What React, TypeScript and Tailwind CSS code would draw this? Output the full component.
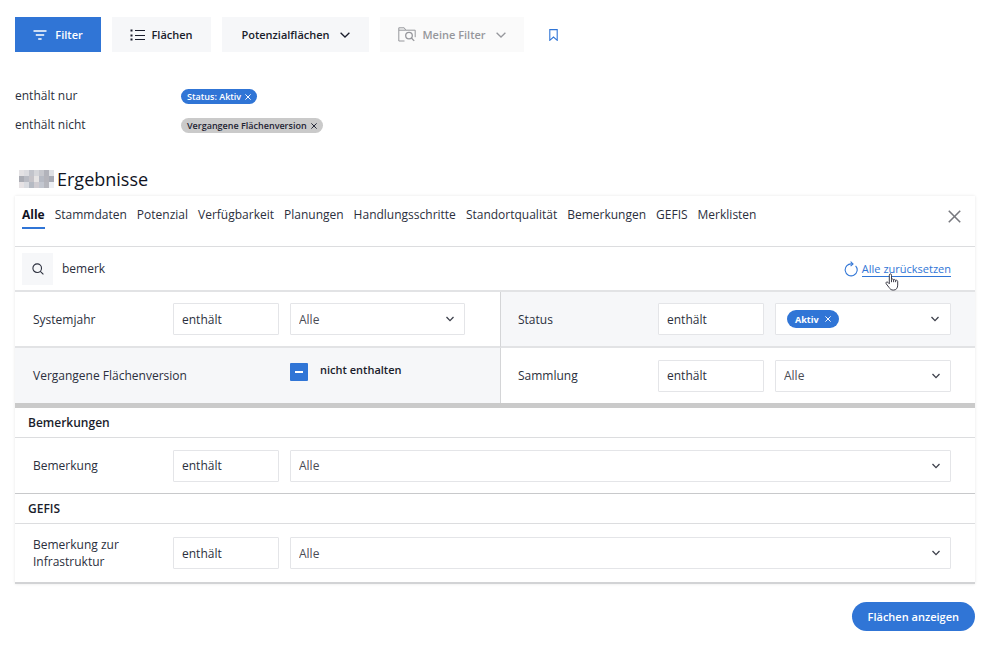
import type { ReactNode } from "react";

const BLUE_CHIP = "bg-[#3075d6] text-white";
const GREY_CHIP = "bg-[#cacaca] text-[#1f2433]";

const tabs = [
  "Alle",
  "Stammdaten",
  "Potenzial",
  "Verfügbarkeit",
  "Planungen",
  "Handlungsschritte",
  "Standortqualität",
  "Bemerkungen",
  "GEFIS",
  "Merklisten",
];

const mosaic = [
  ["#e4e2e4", "#dcdce0", "#c2c4cb", "#d5d6da", "#c6c7cd", "#b2b3bb", "#dfe1e5"],
  ["#aaacb4", "#b9bbc3", "#c5c3c8", "#e6e4e4", "#b6bac4", "#b4b4bb", "#a8abb5"],
  ["#e6e2e4", "#d9dbe0", "#b5bac3", "#cfccd1", "#c3c7d0", "#b6b7be", "#eceff4"],
];

const Chevron = ({ className = "", wide = false }: { className?: string; wide?: boolean }) => (
  <svg
    width={wide ? 10 : 8}
    height="6"
    viewBox={wide ? "0 0 10 6" : "0 0 8 6"}
    fill="none"
    stroke="currentColor"
    strokeWidth="1.3"
    className={className}
  >
    <path d={wide ? "M.6.8 5 5 9.4.8" : "M.5 1 4 4.6 7.5 1"} />
  </svg>
);

const Cross = ({ size, stroke = 1.2 }: { size: number; stroke?: number }) => (
  <svg width={size} height={size} viewBox="0 0 10 10" fill="none" stroke="currentColor" strokeWidth={stroke}>
    <path d="M.6.6 9.4 9.4M9.4.6.6 9.4" />
  </svg>
);

const FilterIcon = () => (
  <svg width="14" height="10" viewBox="0 0 14 10" fill="none" stroke="currentColor" strokeWidth="1.7">
    <path d="M.5 1h13M2.8 5h8.4M5.2 9h3.4" />
  </svg>
);

const ListIcon = () => (
  <svg width="15" height="12" viewBox="0 0 15 12" fill="none" stroke="currentColor">
    <path d="M5 1.5h10M5 6.5h10M5 10.5h10" strokeWidth="1" />
    <path d="M.5 1.5h2M.5 6.5h2M.5 10.5h2" strokeWidth="2" />
  </svg>
);

const FolderSearchIcon = () => (
  <svg width="18" height="15" viewBox="0 0 18 15" fill="none" stroke="currentColor" strokeWidth="1">
    <path d="M6.5 14H.8V.8h5.4l1.6 2.4h9.4v7" />
    <path d="M.8 3.2h7" />
    <circle cx="11" cy="8.6" r="3.3" strokeWidth="1.3" />
    <path d="m13.4 11 2.8 2.9" strokeWidth="1.3" />
  </svg>
);

const BookmarkIcon = () => (
  <svg width="9" height="12" viewBox="0 0 9 12" fill="none" stroke="currentColor" strokeWidth="1.1">
    <path d="M.8.6h7.4v10.7L4.5 8 .8 11.3Z" />
  </svg>
);

const SearchIcon = () => (
  <svg width="12" height="12" viewBox="0 0 12 12" fill="none" stroke="currentColor" strokeWidth="1.1">
    <circle cx="5.2" cy="5.2" r="4.3" />
    <path d="m8.3 8.3 3.1 3.1" />
  </svg>
);

const ResetIcon = () => (
  <svg width="14" height="16" viewBox="0 0 14 16" fill="none" stroke="currentColor" strokeWidth="1.1">
    <path d="M11.6 4.8A6 6 0 1 1 8 2.9" />
    <path d="M6.6.7 9 2.9 6.6 5.1" />
  </svg>
);

const HandCursor = ({ className }: { className: string }) => (
  <svg width="14" height="18" viewBox="0 0 14 18" className={className}>
    <path
      d="M4.3 10.8V2.2c0-1.8 2.2-1.8 2.2 0v4.2c.5-.7 2-.5 2.1.5.6-.7 1.9-.4 2 .6.7-.6 2.1-.2 2.1 1v3.6c0 2.9-1.4 5-4.3 5-2.2 0-3.4-1-4.4-2.7L1.2 10.8C.3 9.3 2 8.3 3 9.4Z"
      fill="#fff"
      stroke="#3d3d48"
      strokeWidth="1"
      strokeLinejoin="round"
    />
    <path d="M6.5 6.4v2.8M8.6 6.9v2.3M10.6 7.5v1.7" stroke="#3d3d48" strokeWidth="1" />
  </svg>
);

const Chip = ({ label, tone, large = false }: { label: string; tone: string; large?: boolean }) => (
  <span
    className={`inline-flex items-center rounded-full text-[9px] ${tone} ${
      large ? "h-[18px] gap-1.5 px-2 font-bold" : "h-[15px] gap-1 px-1.5 font-semibold"
    }`}
  >
    {label}
    <button type="button" aria-label={`${label} entfernen`}>
      <Cross size={6} stroke={1.6} />
    </button>
  </span>
);

const Operator = ({ name }: { name: string }) => (
  <select
    aria-label={`${name} Bedingung`}
    className="h-8 w-[106px] shrink-0 appearance-none rounded-[1px] border border-[#e4e5e8] bg-white px-2 text-[#2b2f3d]"
  >
    <option>enthält</option>
  </select>
);

const ValueSelect = ({ id }: { id: string }) => (
  <div className="relative min-w-0 flex-1">
    <select
      id={id}
      className="h-8 w-full appearance-none rounded-[1px] border border-[#e4e5e8] bg-white px-2 text-[#4a4c55]"
    >
      <option>Alle</option>
    </select>
    <Chevron className="pointer-events-none absolute top-[13px] right-[11px] text-[#3c3f4a]" />
  </div>
);

interface FieldProps {
  id: string;
  label: string;
  className: string;
  children: ReactNode;
}

const Field = ({ id, label, className, children }: FieldProps) => (
  <div className={`flex items-center ${className}`}>
    <label htmlFor={id} className="w-[140px] shrink-0 whitespace-nowrap">
      {label}
    </label>
    <div className="flex min-w-0 flex-1 items-center gap-[11px]">{children}</div>
  </div>
);

const App = () => {
  return (
    <div className="min-h-screen bg-white pt-[17px] pr-[25px] pb-4 pl-[15px] font-['Open_Sans',sans-serif] text-[12px] leading-[17px] text-[#2b2f3d]">
      <div className="flex h-[35px] items-stretch gap-[11px] text-[11px] font-semibold text-[#1a1d2c]">
        <button type="button" className="flex w-[86px] items-center justify-center gap-2 bg-[#3075d6] text-white">
          <FilterIcon />
          Filter
        </button>
        <button type="button" className="flex w-[99px] items-center justify-center gap-1.5 bg-[#f6f7f9]">
          <ListIcon />
          Flächen
        </button>
        <button type="button" className="flex w-[147px] items-center justify-center gap-2.5 bg-[#f6f7f9]">
          Potenzialflächen
          <Chevron wide />
        </button>
        <button type="button" disabled className="flex w-36 items-center justify-center gap-1.5 bg-[#fafafa] text-[#96979c]">
          <FolderSearchIcon />
          Meine Filter
          <Chevron wide className="ml-1" />
        </button>
        <button type="button" aria-label="Merken" className="ml-3.5 w-[14px] text-[#3075d6]">
          <BookmarkIcon />
        </button>
      </div>

      <dl className="mt-[35px] grid grid-cols-[166px_1fr] gap-y-3">
        <dt>enthält nur</dt>
        <dd className="flex items-center pt-0.5">
          <Chip label="Status: Aktiv" tone={BLUE_CHIP} />
        </dd>
        <dt>enthält nicht</dt>
        <dd className="flex items-center pt-0.5">
          <Chip label="Vergangene Flächenversion" tone={GREY_CHIP} />
        </dd>
      </dl>

      <h1 className="mt-8 flex h-7 items-center gap-[3px] pl-1 text-[18px] text-[#10131f]">
        <svg width="35" height="18" viewBox="0 0 35 18" shapeRendering="crispEdges">
          {mosaic.map((row, y) =>
            row.map((color, x) => <rect key={`${x}-${y}`} x={x * 5} y={y * 6} width="5" height="6" fill={color} />)
          )}
        </svg>
        Ergebnisse
      </h1>

      <form className="mt-[3px] border-b-2 border-[#d2d3d5] shadow-[0_0_3px_rgba(0,0,0,0.1)]">
        <div className="flex h-[51px] items-start justify-between border-b border-[#dcdddf] pr-3.5 pl-[7px]">
          <nav className="flex gap-2.5 pt-2.5">
            {tabs.map((tab, idx) => (
              <a
                key={tab}
                href="#"
                className={
                  idx === 0
                    ? "h-[23px] border-b-2 border-[#3075d6] font-bold text-[#10131f]"
                    : "h-[23px]"
                }
              >
                {tab}
              </a>
            ))}
          </nav>
          <button type="button" aria-label="Schließen" className="pt-3.5 text-[#77787e]">
            <Cross size={13} />
          </button>
        </div>

        <div className="flex h-[45px] items-center border-b-2 border-[#e2e3e5] pr-6 pl-[7px]">
          <label htmlFor="suche" className="flex h-8 w-[31px] items-center justify-center bg-[#f6f7f9]">
            <SearchIcon />
          </label>
          <input
            id="suche"
            type="text"
            aria-label="Suche"
            defaultValue="bemerk"
            className="min-w-0 flex-1 pl-[9px] outline-none"
          />
          <div className="relative flex items-center gap-1 text-[#3075d6]">
            <ResetIcon />
            <a href="#" className="h-4 border-b border-[#3075d6] text-[11px] leading-[15px]">
              Alle zurücksetzen
            </a>
            <HandCursor className="absolute top-3 left-[41px]" />
          </div>
        </div>

        <div className="grid grid-cols-[485px_1fr] border-b-[5px] border-[#cacaca]">
          <Field id="systemjahr" label="Systemjahr" className="h-14 border-b-2 border-[#e2e3e5] pr-[35px] pl-[18px]">
            <Operator name="Systemjahr" />
            <ValueSelect id="systemjahr" />
          </Field>
          <Field
            id="status"
            label="Status"
            className="h-14 border-b-2 border-l border-[#e2e3e5] border-l-[#d4d5d7] bg-[#f6f7f9] pr-6 pl-[17px]"
          >
            <Operator name="Status" />
            <div className="flex h-8 min-w-0 flex-1 items-center justify-between rounded-[1px] border border-[#e4e5e8] bg-white px-[11px]">
              <Chip label="Aktiv" tone={BLUE_CHIP} large />
              <button id="status" type="button">
                <Chevron className="text-[#3c3f4a]" />
              </button>
            </div>
          </Field>
          <Field id="vergangene" label="Vergangene Flächenversion" className="h-[55px] bg-[#f6f7f9] pl-[18px]">
            <div className="ml-[117px] flex items-start gap-3 pb-2.5">
              <span className="relative mt-0.5 flex">
                <input
                  id="vergangene"
                  type="checkbox"
                  defaultChecked
                  className="h-[18px] w-[18px] appearance-none rounded-[1px] checked:bg-[#3075d6]"
                />
                <span className="pointer-events-none absolute top-2 left-[5px] h-0.5 w-2 bg-white" />
              </span>
              <label htmlFor="vergangene" className="text-[11px] font-semibold text-[#1a1d2c]">
                nicht enthalten
              </label>
            </div>
          </Field>
          <Field id="sammlung" label="Sammlung" className="h-[55px] border-l border-[#d4d5d7] pr-6 pl-[17px]">
            <Operator name="Sammlung" />
            <ValueSelect id="sammlung" />
          </Field>
        </div>

        <section>
          <h2 className="flex h-[30px] items-center border-b border-[#dcdddf] pl-[13px] font-semibold text-[#1a1d2c]">
            Bemerkungen
          </h2>
          <Field id="bemerkung" label="Bemerkung" className="h-14 border-b border-[#c8c9cb] pr-6 pl-[18px]">
            <Operator name="Bemerkung" />
            <ValueSelect id="bemerkung" />
          </Field>
        </section>

        <section>
          <h2 className="flex h-[30px] items-center border-b border-[#dcdddf] pl-[13px] font-semibold text-[#1a1d2c]">
            GEFIS
          </h2>
          <div className="flex h-[58px] items-center pr-6 pl-[18px]">
            <label htmlFor="infrastruktur" className="w-[140px] shrink-0 pr-6">
              Bemerkung zur Infrastruktur
            </label>
            <div className="flex min-w-0 flex-1 items-center gap-[11px]">
              <Operator name="Infrastruktur" />
              <ValueSelect id="infrastruktur" />
            </div>
          </div>
        </section>
      </form>

      <div className="mt-[18px] flex justify-end">
        <button type="button" className="h-[29px] rounded-full bg-[#3075d6] px-4 text-[11px] font-semibold text-white">
          Flächen anzeigen
        </button>
      </div>
    </div>
  );
};

export default App;
